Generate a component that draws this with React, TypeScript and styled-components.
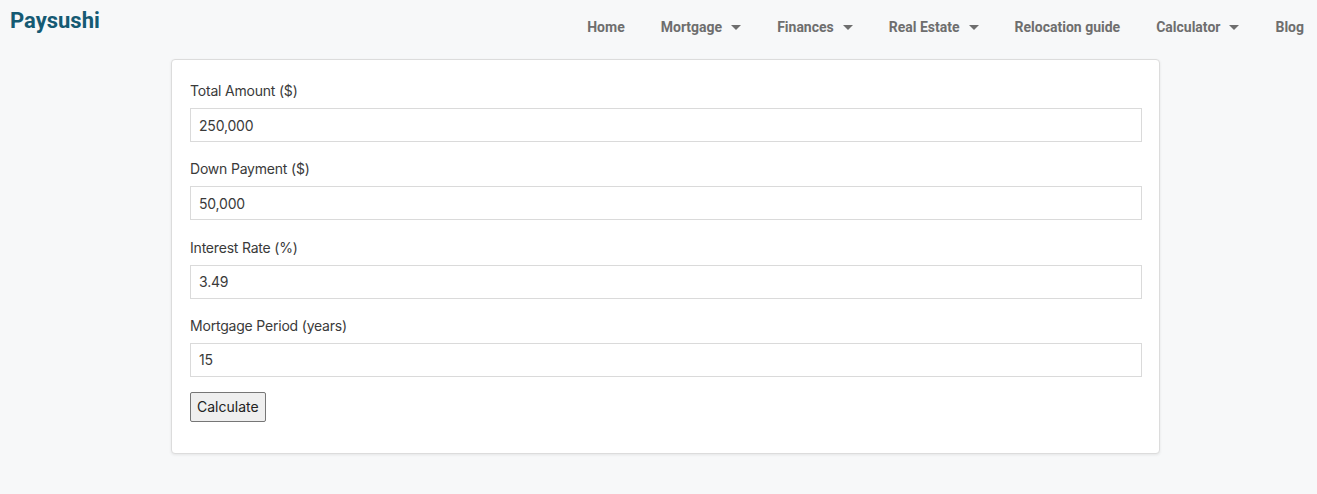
import React from "react";
import styled, { createGlobalStyle } from "styled-components";

const GlobalStyle = createGlobalStyle`
  html, body {
    margin: 0;
    padding: 0;
    background: #f7f8f9;
  }
  * {
    box-sizing: border-box;
  }
`;

const Page = styled.div`
  min-height: 494px;
  background: #f7f8f9;
`;

const Header = styled.header`
  display: flex;
  align-items: flex-start;
  justify-content: space-between;
  height: 59px;
  padding: 0 13px 0 10px;
`;

const Logo = styled.a`
  font-family: Roboto, "Liberation Sans", sans-serif;
  font-weight: 700;
  font-size: 22px;
  color: #155a73;
  text-decoration: none;
  line-height: 26px;
  margin-top: 8px;
`;

const Nav = styled.nav`
  display: flex;
  align-items: center;
  height: 54px;
`;

const NavItem = styled.a<{ $first?: boolean; $last?: boolean }>`
  display: flex;
  align-items: center;
  gap: 9px;
  padding: 0 ${(p) => (p.$last ? "0" : "18px")} 0 ${(p) => (p.$first ? "0" : "18px")};
  font-family: Roboto, "Liberation Sans", sans-serif;
  font-weight: 700;
  font-size: 14px;
  color: #6e6e6e;
  text-decoration: none;
  white-space: nowrap;
`;

const Caret = styled.span`
  width: 0;
  height: 0;
  border-left: 5px solid transparent;
  border-right: 5px solid transparent;
  border-top: 5px solid #6e6e6e;
  margin-top: 1px;
`;

const Card = styled.form`
  width: 989px;
  margin: 0 0 0 171px;
  background: #fff;
  border: 1px solid #dcdcdc;
  border-radius: 4px;
  box-shadow: 0 1px 3px rgba(0, 0, 0, 0.08);
  padding: 21px 18px 31px;
`;

const Field = styled.div`
  display: flex;
  flex-direction: column;
  margin-bottom: 17.3px;
`;

const Label = styled.label`
  font-family: Inter, "Noto Sans", sans-serif;
  font-size: 14px;
  letter-spacing: -0.2px;
  color: #3a3a3a;
  line-height: 20px;
  margin-bottom: 7px;
`;

const Input = styled.input`
  width: 952px;
  height: 34px;
  border: 1px solid #dadada;
  border-radius: 0;
  padding: 0 8px;
  font-family: Inter, "Noto Sans", sans-serif;
  font-size: 14px;
  letter-spacing: -0.2px;
  color: #3a3a3a;
  background: #fff;
  outline: none;
`;

const Button = styled.button`
  height: 30px;
  padding: 0 6px;
  margin-top: -2.5px;
  font-family: Inter, "Noto Sans", sans-serif;
  font-size: 14px;
  color: #222;
  background: #efefef;
  border: 1px solid #767676;
  border-radius: 2px;
`;

const navItems = [
  { label: "Home", caret: false },
  { label: "Mortgage", caret: true },
  { label: "Finances", caret: true },
  { label: "Real Estate", caret: true },
  { label: "Relocation guide", caret: false },
  { label: "Calculator", caret: true },
  { label: "Blog", caret: false },
];

const fields = [
  { label: "Total Amount ($)", value: "250,000" },
  { label: "Down Payment ($)", value: "50,000" },
  { label: "Interest Rate (%)", value: "3.49" },
  { label: "Mortgage Period (years)", value: "15" },
];

export default function App() {
  return (
    <Page>
      <GlobalStyle />
      <Header>
        <Logo href="#">Paysushi</Logo>
        <Nav>
          {navItems.map((item, i) => (
            <NavItem
              key={item.label}
              href="#"
              $first={i === 0}
              $last={i === navItems.length - 1}
            >
              {item.label}
              {item.caret && <Caret />}
            </NavItem>
          ))}
        </Nav>
      </Header>
      <Card onSubmit={(e) => e.preventDefault()}>
        {fields.map((f) => (
          <Field key={f.label}>
            <Label>{f.label}</Label>
            <Input type="text" defaultValue={f.value} />
          </Field>
        ))}
        <Button type="submit">Calculate</Button>
      </Card>
    </Page>
  );
}
